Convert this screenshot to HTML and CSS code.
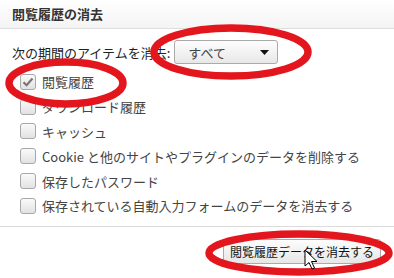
FILE: index.html
```html
<!DOCTYPE html>
<html lang="ja">
<head>
<meta charset="utf-8">
<link rel="stylesheet" href="styles.css">
</head>
<body>
<div class="page">
  <div class="header">閲覧履歴の消去</div>
  <div class="content">
    <div class="period">
      <span class="label">次の期間のアイテムを消去:</span>
      <div class="select">
        <span>すべて</span>
        <svg class="caret" width="9" height="5" viewBox="0 0 9 5"><path d="M0 0H9L4.5 5Z" fill="#111"/></svg>
      </div>
    </div>
    <ul class="items">
      <li><span class="cb checked"><svg width="12" height="10" viewBox="0 0 12 10"><path d="M1.5 5.2L4.6 8.2L10.5 1.5" fill="none" stroke="#777" stroke-width="2.2"/></svg></span>閲覧履歴</li>
      <li><span class="cb"></span>ダウンロード履歴</li>
      <li><span class="cb"></span>キャッシュ</li>
      <li><span class="cb"></span>Cookie と他のサイトやプラグインのデータを削除する</li>
      <li><span class="cb"></span>保存したパスワード</li>
      <li><span class="cb"></span>保存されている自動入力フォームのデータを消去する</li>
    </ul>
  </div>
  <div class="footer">
    <button class="btn">閲覧履歴データを消去する</button>
  </div>
  <svg class="marks" width="394" height="278" viewBox="0 0 394 278">
    <g fill="none" stroke="#e3151d" stroke-width="7.5">
      <ellipse cx="231" cy="52" rx="77" ry="24"/>
      <ellipse cx="66" cy="83" rx="57" ry="21"/>
      <ellipse cx="299" cy="253" rx="90" ry="19"/>
    </g>
    <path d="M305 250V266L309 262.5L312 269L314.5 268L311.5 261.5H317Z" fill="#fff" stroke="#000" stroke-width="1"/>
  </svg>
</div>
</body>
</html>
```
FILE: styles.css
```css
html, body {
  margin: 0;
  padding: 0;
  background: #fff;
}
.page {
  position: relative;
  width: 394px;
  height: 278px;
  overflow: hidden;
  font-family: "Noto Sans CJK JP", "Noto Sans", sans-serif;
  font-size: 13px;
  color: #333;
}
.header {
  height: 29px;
  box-sizing: border-box;
  padding: 5px 12px 0;
  font-weight: bold;
  color: #333;
  background: linear-gradient(#fff, #f4f4f4);
  border-bottom: 1px solid #dedede;
  line-height: 18px;
}
.content {
  padding: 11px 12px 0;
}
.period {
  display: flex;
  align-items: center;
  height: 24px;
}
.label {
  color: #222;
  margin-right: 4px;
}
.select {
  width: 104px;
  height: 24px;
  box-sizing: border-box;
  border: 1px solid #aaa;
  border-radius: 3px;
  background: linear-gradient(#fdfdfd, #e8e8e8);
  display: flex;
  align-items: center;
  justify-content: space-between;
  padding: 0 8px 0 13px;
  color: #444;
}
.items {
  list-style: none;
  margin: 5.5px 0 0;
  padding: 0 0 0 8px;
}
.items li {
  display: flex;
  align-items: center;
  height: 24.8px;
  color: #444;
}
.cb {
  width: 16px;
  height: 16px;
  box-sizing: border-box;
  border: 1px solid #a8a8a8;
  border-radius: 3px;
  background: linear-gradient(#fafafa, #e2e2e2);
  margin-right: 6px;
  display: flex;
  align-items: center;
  justify-content: center;
}
.footer {
  margin-top: 8px;
  border-top: 1px solid #dcdcdc;
  display: flex;
  justify-content: flex-end;
  padding: 12px 13px 0 0;
}
.btn {
  font: inherit;
  font-size: 12px;
  color: #111;
  height: 25px;
  padding: 0 6px;
  border: 1px solid #aaa;
  border-radius: 3px;
  background: linear-gradient(#fdfdfd, #e6e6e6);
}
.marks {
  position: absolute;
  left: 0;
  top: 0;
  pointer-events: none;
}
```
